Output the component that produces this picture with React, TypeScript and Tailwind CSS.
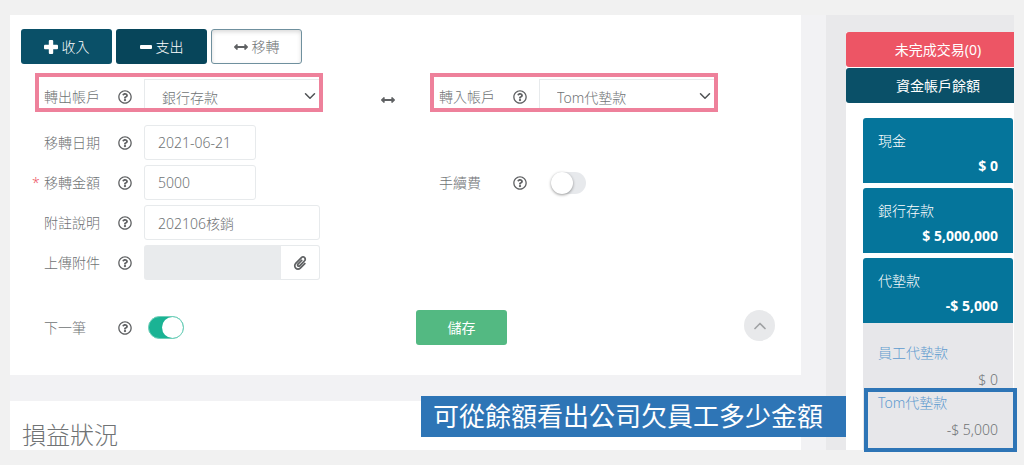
import React, { useState } from 'react';
import { ChevronDown, ChevronUp } from 'lucide-react';
import { FaArrowsAltH, FaPaperclip, FaRegQuestionCircle } from 'react-icons/fa';

const accounts = ['銀行存款', '現金', '代墊款', 'Tom代墊款'];

const balances = [
  { name: '現金', amount: '$ 0' },
  { name: '銀行存款', amount: '$ 5,000,000' },
  { name: '代墊款', amount: '-$ 5,000' }
];

const inputClass =
  'h-[35px] rounded-[3px] border border-[#e7eaec] bg-white px-[13px] text-[#707375] focus:outline-none';

const PlusIcon: React.FC = () => (
  <svg viewBox="0 0 14 14" fill="currentColor" className="h-[14px] w-[14px]">
    <rect x="0" y="4.8" width="14" height="4.4" rx="1" />
    <rect x="4.8" y="0" width="4.4" height="14" rx="1" />
  </svg>
);

const MinusIcon: React.FC = () => (
  <svg viewBox="0 0 12 14" fill="currentColor" className="h-[14px] w-3">
    <rect x="0" y="5" width="12" height="4" rx="1" />
  </svg>
);

interface RowProps {
  id: string;
  label: string;
  required?: boolean;
  children: React.ReactNode;
}

const Row: React.FC<RowProps> = ({ id, label, required, children }) => (
  <div className="flex h-[35px] items-center pl-[22px]">
    <span className="w-3 text-[#ed5565]">{required && '*'}</span>
    <label htmlFor={id} className="w-[74px] whitespace-nowrap">
      {label}
    </label>
    <FaRegQuestionCircle className="mr-3 h-[14px] w-[14px] shrink-0 text-[#5f6163]" />
    {children}
  </div>
);

// Pink outline around an account picker
const Highlight: React.FC = () => (
  <div className="pointer-events-none absolute -top-1.5 left-[25px] h-[39px] w-[288px] border-4 border-[#ee819b]" />
);

interface AccountSelectProps {
  id: string;
  value: string;
  onChange: (value: string) => void;
}

const AccountSelect: React.FC<AccountSelectProps> = ({ id, value, onChange }) => (
  <div className="relative h-[35px] w-[175px]">
    <select
      id={id}
      value={value}
      onChange={(e) => onChange(e.target.value)}
      className="h-8 w-full appearance-none border-t border-l border-[#e7eaec] bg-white pt-1 pr-6 pl-[17px] text-[#707375] focus:outline-none"
    >
      {accounts.map((account) => (
        <option key={account}>{account}</option>
      ))}
    </select>
    <ChevronDown className="pointer-events-none absolute top-2 right-0 h-[18px] w-[18px] text-[#4f5254]" />
  </div>
);

const App: React.FC = () => {
  const [from, setFrom] = useState('銀行存款');
  const [to, setTo] = useState('Tom代墊款');
  const [date, setDate] = useState('2021-06-21');
  const [amount, setAmount] = useState('5000');
  const [note, setNote] = useState('202106核銷');
  const [hasFee, setHasFee] = useState(false);
  const [next, setNext] = useState(true);

  return (
    <div className="overflow-hidden bg-[#f1f1f1] px-[10px] py-[15px] font-['Noto_Sans','Noto_Sans_CJK_TC',sans-serif] text-[14px] leading-5 font-light text-[#707375]">
      <div className="relative flex bg-[#f2f2f4]">
        <main className="mr-[25px] flex min-w-0 flex-1 flex-col">
          <form className="bg-white pt-[14px] pb-[30px]" onSubmit={(e) => e.preventDefault()}>
            <div className="flex gap-1 pl-[11px]">
              <button type="button" className="flex h-[35px] w-[91px] items-center justify-center gap-1 rounded-[3px] bg-[#0a5068] text-white">
                <PlusIcon />
                收入
              </button>
              <button type="button" className="flex h-[35px] w-[91px] items-center justify-center gap-1 rounded-[3px] bg-[#07455a] text-white">
                <MinusIcon />
                支出
              </button>
              <button type="button" className="flex h-[35px] w-[91px] items-center justify-center gap-1 rounded-[3px] border border-[#6f909e] bg-white shadow-[inset_0_2px_4px_rgba(0,0,0,0.15)]">
                <FaArrowsAltH className="h-[14px] w-[14px] text-[#5f6163]" />
                移轉
              </button>
            </div>

            <div className="mt-[15px] grid grid-cols-[1fr_396px]">
              <div className="relative flex items-center">
                <Row id="from" label="轉出帳戶">
                  <AccountSelect id="from" value={from} onChange={setFrom} />
                </Row>
                <Highlight />
                <FaArrowsAltH className="mt-1.5 mr-[10px] ml-auto h-[14px] w-[14px] text-[#5f6163]" />
              </div>
              <div className="relative">
                <Row id="to" label="轉入帳戶">
                  <AccountSelect id="to" value={to} onChange={setTo} />
                </Row>
                <Highlight />
              </div>
            </div>

            <div className="mt-[11px] grid grid-cols-[1fr_396px] gap-y-[5px]">
              <Row id="date" label="移轉日期">
                <input id="date" value={date} onChange={(e) => setDate(e.target.value)} className={`w-28 ${inputClass}`} />
              </Row>
              <div />
              <Row id="amount" label="移轉金額" required>
                <input id="amount" value={amount} onChange={(e) => setAmount(e.target.value)} className={`w-28 ${inputClass}`} />
              </Row>
              <Row id="fee" label="手續費">
                <input
                  id="fee"
                  type="checkbox"
                  role="switch"
                  checked={hasFee}
                  onChange={(e) => setHasFee(e.target.checked)}
                  className="ml-3 flex h-[22px] w-[35px] appearance-none items-center rounded-full bg-[#e7e9ec] before:h-[22px] before:w-[22px] before:rounded-full before:bg-white before:shadow-[0_1px_3px_rgba(0,0,0,0.4)] checked:justify-end checked:bg-[#1ab394]"
                />
              </Row>
              <Row id="note" label="附註說明">
                <input id="note" value={note} onChange={(e) => setNote(e.target.value)} className={`w-44 ${inputClass}`} />
              </Row>
              <div />
              <Row id="file" label="上傳附件">
                <div className="flex w-44">
                  <input id="file" readOnly className="h-[35px] min-w-0 flex-1 rounded-l-[3px] bg-[#e9ebed] px-3 focus:outline-none" />
                  <button type="button" aria-label="選擇檔案" className="flex h-[35px] w-[39px] items-center justify-center rounded-r-[3px] border border-l-0 border-[#e7eaec] bg-white">
                    <FaPaperclip className="h-[14px] w-[14px] text-[#5f6163]" />
                  </button>
                </div>
              </Row>
            </div>

            <div className="mt-[30px] grid grid-cols-[1fr_396px]">
              <Row id="next" label="下一筆">
                <input
                  id="next"
                  type="checkbox"
                  role="switch"
                  checked={next}
                  onChange={(e) => setNext(e.target.checked)}
                  className="ml-1 flex h-[23px] w-9 appearance-none items-center rounded-full border border-[#6fcfb9] bg-[#e7e9ec] before:h-[21px] before:w-[21px] before:rounded-full before:bg-white checked:justify-end checked:bg-[#1ab394]"
                />
              </Row>
              <div className="flex items-start justify-between pr-[26px] pl-[11px]">
                <button type="submit" className="h-[35px] w-[91px] rounded-[3px] bg-[#53b982] font-normal text-white">
                  儲存
                </button>
                <button type="button" aria-label="收合" className="flex h-[31px] w-[31px] items-center justify-center rounded-full bg-[#e8e9eb]">
                  <ChevronUp className="h-5 w-5 text-[#a0a2a4]" />
                </button>
              </div>
            </div>
          </form>

          <section className="mt-[26px] flex-1 bg-white pt-[19px] pl-3">
            <h2 className="text-[24px] leading-[30px]">損益狀況</h2>
          </section>
        </main>

        <aside className="w-[188px] bg-[#e9e9eb] pt-[17px] pl-5">
          <div className="bg-white">
            <button type="button" className="block h-[35px] w-full rounded-l-[3px] bg-[#ed5565] pl-4 font-normal text-white">
              未完成交易(0)
            </button>
            <button type="button" className="mt-px block h-[35px] w-full rounded-l-[3px] bg-[#0a5068] pl-4 font-normal text-white">
              資金帳戶餘額
            </button>

            <div className="mt-[15px] mr-px ml-[17px]">
              <ul className="flex flex-col gap-[5px]">
                {balances.map((item) => (
                  <li key={item.name} className="rounded-t-[3px] bg-[#05759b] px-[15px] pt-[13px] pb-[7px] text-white">
                    <p>{item.name}</p>
                    <p className="mt-[5px] text-right font-bold">{item.amount}</p>
                  </li>
                ))}
              </ul>
              <ul className="bg-[#e7e7ea] pt-5 pb-[10px]">
                <li className="px-[15px]">
                  <a href="#staff" className="block text-[#5f9bcf]">員工代墊款</a>
                  <p className="mt-[7px] text-right">$ 0</p>
                </li>
                <li className="relative mt-[3px] px-[15px]">
                  <a href="#tom" className="block text-[#5f9bcf]">Tom代墊款</a>
                  <p className="mt-[7px] text-right">-$ 5,000</p>
                  <div className="pointer-events-none absolute -top-[5px] -right-1 -bottom-3 left-px border-4 border-[#2e75b6]" />
                </li>
              </ul>
            </div>
          </div>
        </aside>

        {/* Callout */}
        <p className="absolute right-[168px] bottom-[13px] bg-[#2e75b6] py-[2px] pr-[23px] pl-3 text-[26px] leading-[37px] font-normal whitespace-nowrap text-white">
          可從餘額看出公司欠員工多少金額
        </p>
      </div>
    </div>
  );
};

export default App;
